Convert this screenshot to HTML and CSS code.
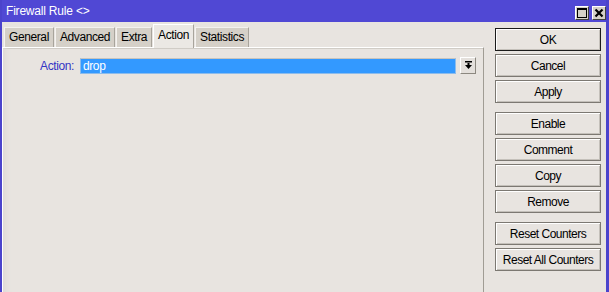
FILE: index.html
```html
<!DOCTYPE html>
<html>
<head>
    <link rel="stylesheet" href="styles.css">
</head>
<body>
    <div class="window">
        <div class="titlebar">
            <span class="title">Firewall Rule &lt;&gt;</span>
            <div class="title-btns">
                <span class="tbtn">
                    <svg width="10" height="10" viewBox="0 0 10 10">
                        <rect x="0.5" y="0.5" width="9" height="9" fill="none" stroke="#000" />
                        <rect x="0" y="0" width="10" height="2" fill="#000" />
                    </svg>
                </span>
                <span class="tbtn">
                    <svg width="10" height="10" viewBox="0 0 10 10">
                        <path d="M1.5,1.5 L8.5,8.5 M8.5,1.5 L1.5,8.5" stroke="#000" stroke-width="2.2" />
                    </svg>
                </span>
            </div>
        </div>

        <div class="content">
            <div class="main">
                <div class="tabs">
                    <div class="tab">General</div>
                    <div class="tab">Advanced</div>
                    <div class="tab">Extra</div>
                    <div class="tab active">Action</div>
                    <div class="tab">Statistics</div>
                </div>
                <div class="panel">
                    <div class="field">
                        <label class="field-label">Action:</label>
                        <div class="select">drop</div>
                        <span class="drop-btn">
                            <svg width="9" height="9" viewBox="0 0 9 9">
                                <rect x="1" y="0" width="7" height="1.5" fill="#000" />
                                <rect x="3.5" y="2" width="2" height="2" fill="#000" />
                                <path d="M1,4 L8,4 L4.5,8 Z" fill="#000" />
                            </svg>
                        </span>
                    </div>
                </div>
            </div>

            <div class="side">
                <div class="btn-group">
                    <button class="btn default">OK</button>
                    <button class="btn">Cancel</button>
                    <button class="btn">Apply</button>
                </div>
                <div class="btn-group">
                    <button class="btn">Enable</button>
                    <button class="btn">Comment</button>
                    <button class="btn">Copy</button>
                    <button class="btn">Remove</button>
                </div>
                <div class="btn-group">
                    <button class="btn">Reset Counters</button>
                    <button class="btn">Reset All Counters</button>
                </div>
            </div>
        </div>
    </div>
</body>
</html>
```

FILE: styles.css
```css
html, body {
    margin: 0;
    padding: 0;
    height: 100%;
    overflow: hidden;
}

body {
    font-family: "Liberation Sans", Arial, sans-serif;
    font-size: 12px;
    letter-spacing: -0.4px;
    background: #4b43cc;
}

.window {
    display: flex;
    flex-direction: column;
    height: 100%;
    border-left: 2px solid #4b43cc;
    border-right: 3px solid #4b43cc;
    box-sizing: border-box;
}

/* title bar */
.titlebar {
    height: 22px;
    flex: none;
    display: flex;
    align-items: center;
    justify-content: space-between;
    background: #5048d4;
    color: white;
    padding: 0 0 0 4px;
    letter-spacing: -0.2px;
}

.title-btns {
    display: flex;
    gap: 3px;
    margin-top: 4px;
}

.tbtn {
    width: 14px;
    height: 14px;
    box-sizing: border-box;
    display: flex;
    align-items: center;
    justify-content: center;
    background: #d4d0c8;
    border: 1px solid;
    border-color: #ffffff #404040 #404040 #ffffff;
}

.content {
    flex: 1;
    display: flex;
    background: #e8e4e0;
    min-height: 0;
}

/* tabs and panel */
.main {
    width: 482px;
    display: flex;
    flex-direction: column;
}

.tabs {
    display: flex;
    align-items: flex-end;
    gap: 1px;
    height: 25px;
    padding-left: 2px;
    position: relative;
    z-index: 1;
}

.tab {
    height: 20px;
    line-height: 19px;
    padding: 0 4px;
    background: #d5d0c8;
    border-top: 1px solid #f4f2ef;
    border-left: 1px solid #f4f2ef;
    border-right: 1px solid #a8a49c;
    box-sizing: border-box;
    color: #000;
}

.tab.active {
    height: 24px;
    line-height: 20px;
    margin-bottom: -1px;
    background: #ebe8e4;
    border-top-color: #ffffff;
    border-left-color: #ffffff;
}

.panel {
    flex: 1;
    background: #e8e4e0;
    border-top: 1px solid #ffffff;
    border-left: 1px solid #ffffff;
    border-right: 1px solid #a09c94;
    box-shadow: inset 8px 0 6px -6px #dcd8d4, inset 0 1px 0 #d0ccc6;
    padding: 9px 7px 0 0;
}

.field {
    display: flex;
    align-items: center;
}

.field-label {
    width: 71px;
    text-align: right;
    color: #3434c4;
    padding-right: 6px;
}

.select {
    width: 376px;
    height: 16px;
    line-height: 15px;
    box-sizing: border-box;
    background: #3399ff;
    border: 1px solid #8cbcec;
    border-top-color: #c8c4be;
    color: #ffffff;
    padding-left: 2px;
}

.drop-btn {
    width: 16px;
    height: 17px;
    margin-left: 4px;
    box-sizing: border-box;
    display: flex;
    align-items: center;
    justify-content: center;
    border: 1px solid;
    border-color: #ffffff #8c8880 #8c8880 #ffffff;
    background: #e4e0dc;
}

/* side buttons */
.side {
    flex: 1;
    padding: 6px 0 0 11px;
    display: flex;
    flex-direction: column;
    gap: 9px;
}

.btn-group {
    display: flex;
    flex-direction: column;
    gap: 3px;
}

.btn {
    width: 106px;
    height: 23px;
    padding: 0;
    box-sizing: border-box;
    background: #e8e4e0;
    border: 1px solid #7c7872;
    box-shadow: inset 1px 1px 0 #ffffff, inset -1px -1px 0 #c4c0ba;
    font-family: inherit;
    font-size: 12px;
    letter-spacing: -0.5px;
    color: #000;
}

.btn.default {
    border: 1px solid #1a1a1a;
}
```
